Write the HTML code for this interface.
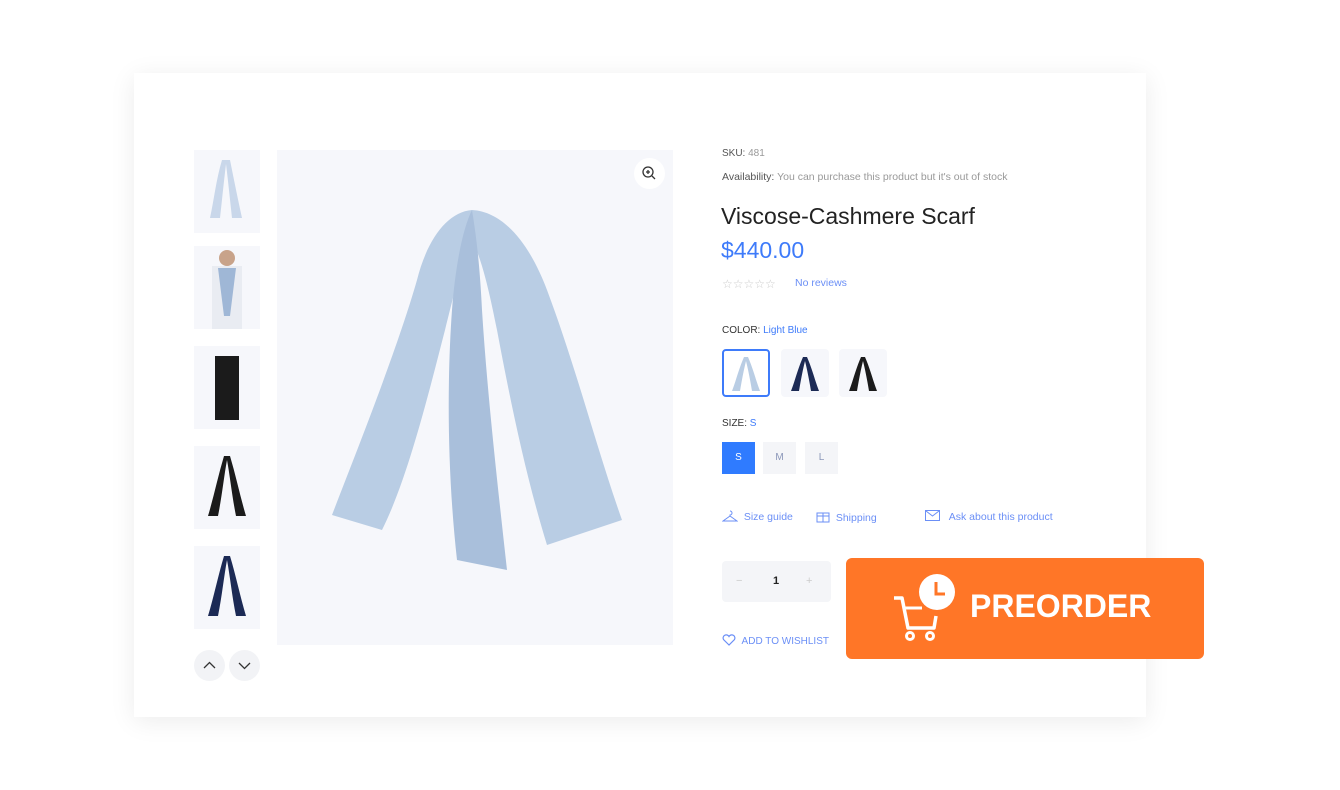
<!DOCTYPE html>
<html><head><meta charset="utf-8"><style>
*{box-sizing:border-box;margin:0;padding:0}
body{width:1340px;height:790px;background:#fff;font-family:"Liberation Sans",sans-serif;position:relative;overflow:hidden}
.card{position:absolute;left:134px;top:73px;width:1012px;height:644px;background:#fff;box-shadow:0 4px 24px rgba(0,0,0,.08)}
.abs{position:absolute}
.thumb{position:absolute;left:194px;width:66px;height:83px;background:#f6f7fb}
.main{position:absolute;left:277px;top:150px;width:396px;height:495px;background:#f6f7fb}
.t{position:absolute;font-size:10.5px;color:#999;white-space:nowrap}
.blue{color:#3e7bfa}
.sw{position:absolute;top:349px;width:48px;height:48px;background:#f6f7fb;border-radius:4px}
.sz{position:absolute;top:442px;width:33px;height:32px;background:#f4f5f8;font-size:10px;color:#8a96b8;text-align:center;line-height:32px}
</style></head><body>
<div class="card"></div>
<div class="thumb" style="top:150px"><svg width="66" height="83"><path d="M28 10 C22 30 20 50 16 68 L26 68 C28 50 30 30 32 14 C34 30 36 50 38 68 L48 68 C44 50 40 30 36 10Z" fill="#c9d7ea"/></svg></div>
<div class="thumb" style="top:246px"><svg width="66" height="83"><rect x="18" y="20" width="30" height="63" fill="#e9ecf2"/><circle cx="33" cy="12" r="8" fill="#c8a38a"/><path d="M24 22 L30 70 L36 70 L42 22Z" fill="#9fb7d6"/></svg></div>
<div class="thumb" style="top:346px"><svg width="66" height="83"><rect x="21" y="10" width="24" height="64" fill="#1b1b1b"/></svg></div>
<div class="thumb" style="top:446px"><svg width="66" height="83"><path d="M30 10 C24 30 20 50 14 70 L24 70 C28 50 30 30 33 14 C36 30 38 50 42 70 L52 70 C46 50 42 30 36 10Z" fill="#1b1b1b"/></svg></div>
<div class="thumb" style="top:546px"><svg width="66" height="83"><path d="M30 10 C24 30 20 50 14 70 L24 70 C28 50 30 30 33 14 C36 30 38 50 42 70 L52 70 C46 50 42 30 36 10Z" fill="#1c2a55"/></svg></div>
<div class="abs" style="left:194px;top:650px;width:31px;height:31px;border-radius:50%;background:#f2f3f6"><svg width="31" height="31"><path d="M10 18 L15.5 12.5 L21 18" fill="none" stroke="#333" stroke-width="1.3"/></svg></div>
<div class="abs" style="left:229px;top:650px;width:31px;height:31px;border-radius:50%;background:#f2f3f6"><svg width="31" height="31"><path d="M10 13 L15.5 18.5 L21 13" fill="none" stroke="#333" stroke-width="1.3"/></svg></div>
<div class="main"><svg width="396" height="495">
<path d="M195 60 C170 62 150 90 140 130 C120 200 80 300 55 365 L105 380 C130 330 150 250 168 180 C178 140 185 110 195 90 C205 110 212 140 220 180 C235 260 250 330 270 395 L345 370 C320 300 300 220 270 140 C255 100 230 62 195 60Z" fill="#b9cde4"/>
<path d="M195 60 C185 80 178 120 175 160 C170 230 170 320 180 410 L230 420 C220 330 210 240 205 160 C203 120 200 90 195 60Z" fill="#a9bfdb"/>
</svg>
<div class="abs" style="left:357px;top:8px;width:31px;height:31px;border-radius:50%;background:#fff"><svg width="31" height="31"><circle cx="14" cy="14" r="5" fill="none" stroke="#333" stroke-width="1.3"/><path d="M18 18 L21 21 M12 14h4 M14 12v4" stroke="#333" stroke-width="1.3"/></svg></div>
</div>
<div class="t" style="left:722px;top:148px;font-size:10px"><span style="color:#555">SKU:</span> 481</div>
<div class="t" style="left:722px;top:171px;font-size:10.5px"><span style="color:#555">Availability:</span> You can purchase this product but it's out of stock</div>
<div class="t" style="left:721px;top:203px;font-size:23px;color:#222">Viscose-Cashmere Scarf</div>
<div class="t blue" style="left:721px;top:237px;font-size:23px">$440.00</div>
<div class="t" style="left:722px;top:277px;color:#ccc;font-size:12px;letter-spacing:0">☆☆☆☆☆</div>
<div class="t" style="left:795px;top:277px;font-size:10.5px;color:#6b8ff6">No reviews</div>
<div class="t" style="left:722px;top:325px;font-size:10px;color:#333">COLOR: <span class="blue">Light Blue</span></div>
<div class="sw" style="left:722px;border:2px solid #3e7bfa;background:#fff"><svg width="44" height="44"><path d="M20 6 C14 20 12 30 8 40 L16 40 C18 28 20 18 22 10 C24 18 26 28 28 40 L36 40 C32 30 30 20 24 6Z" fill="#b9cde4"/></svg></div>
<div class="sw" style="left:781px"><svg width="48" height="48"><path d="M22 8 C16 22 14 32 10 42 L18 42 C20 30 22 20 24 12 C26 20 28 30 30 42 L38 42 C34 32 32 22 26 8Z" fill="#1c2a55"/></svg></div>
<div class="sw" style="left:839px"><svg width="48" height="48"><path d="M22 8 C16 22 14 32 10 42 L18 42 C20 30 22 20 24 12 C26 20 28 30 30 42 L38 42 C34 32 32 22 26 8Z" fill="#1b1b1b"/></svg></div>
<div class="t" style="left:722px;top:418px;font-size:10px;color:#333">SIZE: <span class="blue">S</span></div>
<div class="sz" style="left:722px;background:#2f7bff;color:#fff">S</div>
<div class="sz" style="left:763px">M</div>
<div class="sz" style="left:805px">L</div>
<div class="t" style="left:722px;top:510px;color:#6b8ff6"><svg width="16" height="12" style="vertical-align:-2px"><path d="M8 1 a2 2 0 1 1 0 4 L8 6 L1 11 H15 L8 6" fill="none" stroke="#6b8ff6"/></svg>&nbsp;&nbsp;Size guide</div>
<div class="t" style="left:816px;top:510px;color:#6b8ff6"><svg width="14" height="13" style="vertical-align:-2px"><rect x="1" y="3" width="12" height="9" fill="none" stroke="#6b8ff6"/><path d="M1 6h12M7 3v9" stroke="#6b8ff6"/></svg>&nbsp;&nbsp;Shipping</div>
<div class="t" style="left:925px;top:510px;color:#6b8ff6"><svg width="15" height="11" style="vertical-align:-1px"><rect x="0.5" y="0.5" width="14" height="10" fill="none" stroke="#6b8ff6"/><path d="M1 1l6.5 5 6.5-5" fill="none" stroke="#6b8ff6"/></svg>&nbsp;&nbsp;&nbsp;Ask about this product</div>
<div class="abs" style="left:722px;top:561px;width:109px;height:41px;background:#f4f5f8;border-radius:4px;font-size:11px;line-height:41px">
<span class="abs" style="left:14px;color:#ccc">−</span><span class="abs" style="left:51px;color:#222;font-weight:bold">1</span><span class="abs" style="left:84px;color:#ccc">+</span></div>
<div class="t" style="left:722px;top:634px;color:#6b8ff6;font-size:10px"><svg width="14" height="12" style="vertical-align:-2px"><path d="M7 11 L1.5 5.5 A3 3 0 0 1 7 2.5 A3 3 0 0 1 12.5 5.5Z" fill="none" stroke="#6b8ff6" stroke-width="1.2"/></svg>&nbsp;&nbsp;ADD TO WISHLIST</div>
<div class="abs" style="left:846px;top:558px;width:358px;height:101px;background:#ff7627;border-radius:6px">
<svg class="abs" style="left:44px;top:14px" width="70" height="70"><path d="M4 26 H12 L18 56 H44 L46 44" fill="none" stroke="#fff" stroke-width="3.5" stroke-linejoin="round"/><path d="M14 36 H32" stroke="#fff" stroke-width="3"/><circle cx="20" cy="64" r="3.5" fill="none" stroke="#fff" stroke-width="3"/><circle cx="40" cy="64" r="3.5" fill="none" stroke="#fff" stroke-width="3"/><circle cx="47" cy="20" r="18" fill="#fff"/><path d="M46 10 V22 H55" fill="none" stroke="#ff7627" stroke-width="3"/></svg>
<div class="abs" style="left:124px;top:30px;font-size:32px;font-weight:bold;color:#fff">PREORDER</div>
</div>
</body></html>
